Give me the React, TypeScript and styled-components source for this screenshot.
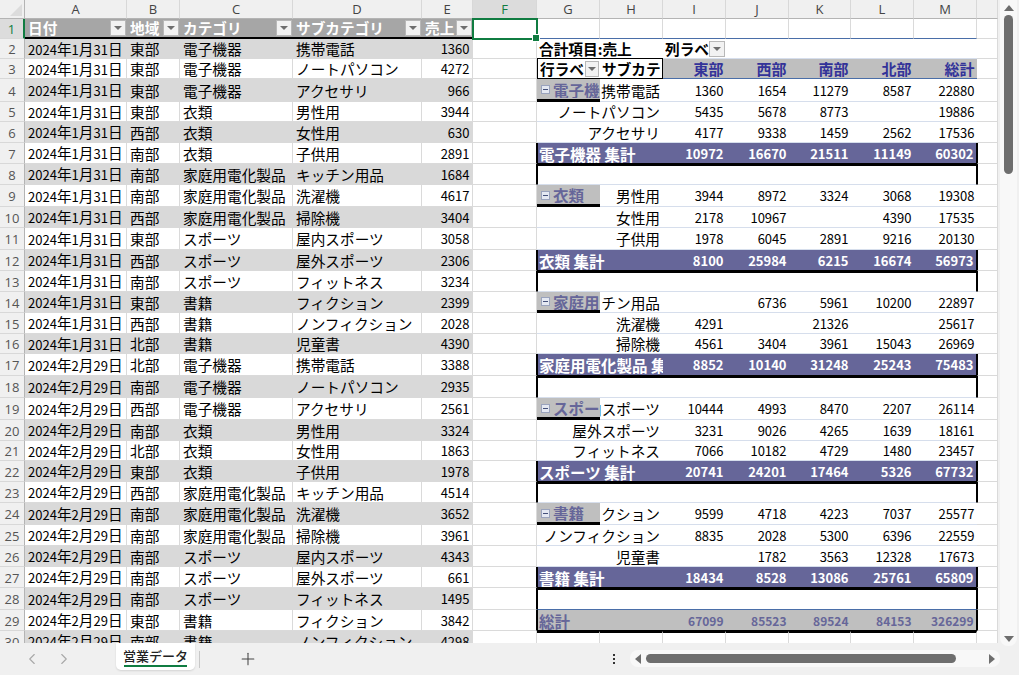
import React from 'react';
import styled, { createGlobalStyle, css } from 'styled-components';
import { ChevronLeft, ChevronRight, Plus } from 'lucide-react';

const GlobalStyle = createGlobalStyle`
  html, body { margin: 0; padding: 0; height: 100%; overflow: hidden; background: #f0f0f0; }
  #root { height: 100%; }
`;

const FONT = '"Noto Sans CJK JP", "Noto Sans", sans-serif';
const GRID = '#dadada';
const PIVOT_LINE = '#d6deec';
const PIVOT_BLUE = '#4a6ea8';
const PURPLE = '#666699';

const COLS = [
  { name: '', width: 25 },
  { name: 'A', width: 102 },
  { name: 'B', width: 53 },
  { name: 'C', width: 113 },
  { name: 'D', width: 129 },
  { name: 'E', width: 51 },
  { name: 'F', width: 64 },
  { name: 'G', width: 63 },
  { name: 'H', width: 63 },
  { name: 'I', width: 63 },
  { name: 'J', width: 63 },
  { name: 'K', width: 62 },
  { name: 'L', width: 63 },
  { name: 'M', width: 63 },
  { name: '', width: 21 },
];

// row heights are not even in the sheet, index 0 is row 1
const ROW_HEIGHTS = [20, 20, 20, 23, 20, 21, 21, 21, 22, 21, 22, 21, 21, 21, 21, 20, 22, 22, 22, 21, 20, 21, 21, 22, 21, 21, 21, 22, 21, 21];

const JAN = '2024年1月31日';
const FEB = '2024年2月29日';
const SALES: [string, string, string, string, number][] = [
  [JAN, '東部', '電子機器', '携帯電話', 1360],
  [JAN, '東部', '電子機器', 'ノートパソコン', 4272],
  [JAN, '東部', '電子機器', 'アクセサリ', 966],
  [JAN, '東部', '衣類', '男性用', 3944],
  [JAN, '西部', '衣類', '女性用', 630],
  [JAN, '南部', '衣類', '子供用', 2891],
  [JAN, '南部', '家庭用電化製品', 'キッチン用品', 1684],
  [JAN, '南部', '家庭用電化製品', '洗濯機', 4617],
  [JAN, '西部', '家庭用電化製品', '掃除機', 3404],
  [JAN, '東部', 'スポーツ', '屋内スポーツ', 3058],
  [JAN, '西部', 'スポーツ', '屋外スポーツ', 2306],
  [JAN, '南部', 'スポーツ', 'フィットネス', 3234],
  [JAN, '東部', '書籍', 'フィクション', 2399],
  [JAN, '西部', '書籍', 'ノンフィクション', 2028],
  [JAN, '北部', '書籍', '児童書', 4390],
  [FEB, '北部', '電子機器', '携帯電話', 3388],
  [FEB, '南部', '電子機器', 'ノートパソコン', 2935],
  [FEB, '西部', '電子機器', 'アクセサリ', 2561],
  [FEB, '南部', '衣類', '男性用', 3324],
  [FEB, '北部', '衣類', '女性用', 1863],
  [FEB, '東部', '衣類', '子供用', 1978],
  [FEB, '西部', '家庭用電化製品', 'キッチン用品', 4514],
  [FEB, '南部', '家庭用電化製品', '洗濯機', 3652],
  [FEB, '南部', '家庭用電化製品', '掃除機', 3961],
  [FEB, '南部', 'スポーツ', '屋内スポーツ', 4343],
  [FEB, '南部', 'スポーツ', '屋外スポーツ', 661],
  [FEB, '南部', 'スポーツ', 'フィットネス', 1495],
  [FEB, '東部', '書籍', 'フィクション', 3842],
  [FEB, '南部', '書籍', 'ノンフィクション', 4298],
];

type Values = (number | null)[];
type PivotRow =
  | { kind: 'title' }
  | { kind: 'head' }
  | { kind: 'item'; group?: string; label: string; values: Values }
  | { kind: 'total'; label: string; values: Values }
  | { kind: 'blank'; last?: boolean }
  | { kind: 'grand'; values: Values }
  | { kind: 'below' };

const PIVOT: PivotRow[] = [
  { kind: 'title' },
  { kind: 'head' },
  { kind: 'item', group: '電子機器', label: '携帯電話', values: [1360, 1654, 11279, 8587, 22880] },
  { kind: 'item', label: 'ノートパソコン', values: [5435, 5678, 8773, null, 19886] },
  { kind: 'item', label: 'アクセサリ', values: [4177, 9338, 1459, 2562, 17536] },
  { kind: 'total', label: '電子機器 集計', values: [10972, 16670, 21511, 11149, 60302] },
  { kind: 'blank' },
  { kind: 'item', group: '衣類', label: '男性用', values: [3944, 8972, 3324, 3068, 19308] },
  { kind: 'item', label: '女性用', values: [2178, 10967, null, 4390, 17535] },
  { kind: 'item', label: '子供用', values: [1978, 6045, 2891, 9216, 20130] },
  { kind: 'total', label: '衣類 集計', values: [8100, 25984, 6215, 16674, 56973] },
  { kind: 'blank' },
  { kind: 'item', group: '家庭用電化製品', label: 'キッチン用品', values: [null, 6736, 5961, 10200, 22897] },
  { kind: 'item', label: '洗濯機', values: [4291, null, 21326, null, 25617] },
  { kind: 'item', label: '掃除機', values: [4561, 3404, 3961, 15043, 26969] },
  { kind: 'total', label: '家庭用電化製品 集計', values: [8852, 10140, 31248, 25243, 75483] },
  { kind: 'blank' },
  { kind: 'item', group: 'スポーツ', label: '屋内スポーツ', values: [10444, 4993, 8470, 2207, 26114] },
  { kind: 'item', label: '屋外スポーツ', values: [3231, 9026, 4265, 1639, 18161] },
  { kind: 'item', label: 'フィットネス', values: [7066, 10182, 4729, 1480, 23457] },
  { kind: 'total', label: 'スポーツ 集計', values: [20741, 24201, 17464, 5326, 67732] },
  { kind: 'blank' },
  { kind: 'item', group: '書籍', label: 'フィクション', values: [9599, 4718, 4223, 7037, 25577] },
  { kind: 'item', label: 'ノンフィクション', values: [8835, 2028, 5300, 6396, 22559] },
  { kind: 'item', label: '児童書', values: [null, 1782, 3563, 12328, 17673] },
  { kind: 'total', label: '書籍 集計', values: [18434, 8528, 13086, 25761, 65809] },
  { kind: 'blank', last: true },
  { kind: 'grand', values: [67099, 85523, 89524, 84153, 326299] },
  { kind: 'below' },
];

// the black frame around the pivot straddles the column lines, so the
// neighbouring F and N cells carry half of it
const hasFrame = (row: PivotRow) => row.kind === 'total' || row.kind === 'blank' || row.kind === 'grand';

const Page = styled.div`
  width: 1019px;
  height: 675px;
  display: flex;
  flex-direction: column;
  background: #f0f0f0;
  font-family: ${FONT};
  overflow: hidden;
`;

const Workspace = styled.div`
  height: 643px;
  display: flex;
`;

const SheetArea = styled.div`
  width: 998px;
  overflow: hidden;
  background: #fff;
`;

const Sheet = styled.table`
  width: 998px;
  table-layout: fixed;
  border-collapse: separate;
  border-spacing: 0;
  color: #000;
  font-size: 14.67px;
  line-height: 16px;
`;

const Row = styled.tr<{ $h: number }>`
  height: ${(p) => p.$h}px;
`;

const ColHead = styled.th<{ $active?: boolean }>`
  height: 19px;
  padding: 0;
  box-sizing: border-box;
  background: ${(p) => (p.$active ? '#dcdcdc' : '#f0f0f0')};
  border-right: 1px solid #d8d8d8;
  border-bottom: 1px solid #b4b4b4;
  color: ${(p) => (p.$active ? '#107c41' : '#444')};
  font: 400 13px "Open Sans", sans-serif;
`;

const Corner = styled.th`
  position: relative;
  padding: 0;
  background: #f0f0f0;
  border-right: 1px solid #b4b4b4;
  border-bottom: 1px solid #b4b4b4;
  &::after {
    content: '';
    position: absolute;
    right: 2px;
    bottom: 2px;
    border-style: solid;
    border-width: 0 0 12px 12px;
    border-color: transparent transparent #dcdcdc transparent;
  }
`;

const RowHead = styled.th<{ $active?: boolean }>`
  padding: 1px 0 0;
  box-sizing: border-box;
  background: ${(p) => (p.$active ? '#dcdcdc' : '#f0f0f0')};
  border-right: ${(p) => (p.$active ? '2px solid #107c41' : '1px solid #b4b4b4')};
  border-bottom: 1px solid #d8d8d8;
  color: ${(p) => (p.$active ? '#107c41' : '#555')};
  font: 400 13px "Open Sans", sans-serif;
  text-align: center;
`;

const baseCell = css`
  padding: 1px 0 0;
  box-sizing: border-box;
  overflow: hidden;
  white-space: nowrap;
`;

const GridCell = styled.td<{ $under?: string; $top?: boolean; $frame?: 'left' | 'right' }>`
  ${baseCell}
  border-right: 1px solid ${(p) => (p.$frame === 'right' ? '#000' : GRID)};
  border-bottom: 1px solid ${(p) => p.$under ?? GRID};
  ${(p) => p.$frame === 'left' && 'border-left: 1px solid #000;'}
  ${(p) => p.$top && 'border-top: 2px solid #000;'}
`;

const DataCell = styled.td<{ $band: boolean; $num?: boolean }>`
  ${baseCell}
  padding: 1px 2.5px 0 3px;
  background: ${(p) => (p.$band ? '#d9d9d9' : '#fff')};
  border-right: 1px solid ${(p) => (p.$band ? '#d9d9d9' : GRID)};
  border-bottom: 1px solid ${(p) => (p.$band ? '#d9d9d9' : GRID)};
  ${(p) => p.$num && 'text-align: right; font-size: 13px;'}
`;

const Digits = styled.span`
  font-size: 13px;
`;

const TableHead = styled.td`
  ${baseCell}
  padding: 0 1px 0 3px;
  background: #a6a6a6;
  border-bottom: 2px solid #000;
  color: #fff;
  font-weight: 700;
`;

const HeadInner = styled.div`
  display: flex;
  align-items: center;
  justify-content: space-between;
  overflow: hidden;
`;

const FilterButton = styled.span<{ $w?: number }>`
  flex: none;
  width: ${(p) => p.$w ?? 16}px;
  height: 16px;
  box-sizing: border-box;
  display: flex;
  align-items: center;
  justify-content: center;
  background: #f2f2f2;
  border: 1px solid #b8b8b8;
  &::after {
    content: '';
    border-style: solid;
    border-width: 4px 4px 0 4px;
    border-color: #6e6e6e transparent transparent transparent;
  }
`;

const SelectedCell = styled.td`
  position: relative;
  padding: 0;
  box-sizing: border-box;
  outline: 2px solid #107c41;
  outline-offset: -1px;
`;

const FillHandle = styled.span`
  position: absolute;
  right: -3px;
  bottom: -3px;
  width: 6px;
  height: 6px;
  background: #107c41;
  border: 1px solid #fff;
  z-index: 2;
`;

const TitleCell = styled.td<{ $boxed?: boolean }>`
  ${baseCell}
  padding-left: 2px;
  font-weight: 700;
  border-bottom: 1px solid ${(p) => (p.$boxed ? '#000' : PIVOT_LINE)};
`;

const TitleLabel = styled.div`
  display: flex;
  align-items: center;
  overflow: hidden;
`;

const HeadBoxCell = styled.td<{ $first?: boolean }>`
  ${baseCell}
  padding-left: 2px;
  font-weight: 700;
  border-bottom: 1px solid #000;
  ${(p) => (p.$first ? 'border-left: 1px solid #000; padding-right: 1px;' : 'border-right: 1px solid #000;')}
`;

const ValueCell = styled.td<{ $tone: 'item' | 'head' | 'total' | 'grand'; $edge?: boolean }>`
  ${baseCell}
  padding-right: 2.5px;
  text-align: right;
  font-size: 13px;
  border-bottom: 1px solid ${PIVOT_LINE};
  ${(p) =>
    p.$tone === 'head' &&
    css`
      background: #bfbfbf;
      color: #333399;
      font-size: 15px;
      font-weight: 700;
      border-bottom-color: ${PIVOT_BLUE};
    `}
  ${(p) =>
    p.$tone === 'total' &&
    css`
      background: ${PURPLE};
      color: #fff;
      font-weight: 700;
      border-bottom-color: #000;
    `}
  ${(p) =>
    p.$tone === 'grand' &&
    css`
      background: #bfbfbf;
      color: ${PURPLE};
      font-size: 12px;
      font-weight: 700;
      border-bottom-color: #000;
    `}
  ${(p) => p.$edge && 'border-right: 1px solid #000;'}
`;

const GroupCell = styled.td`
  ${baseCell}
  padding-left: 4px;
  background: #bfbfbf;
  color: ${PURPLE};
  font-size: 15.5px;
  font-weight: 700;
  border-bottom: 3px solid #000;
`;

const GroupLabel = styled.div`
  display: flex;
  align-items: center;
  gap: 3px;
  overflow: hidden;
`;

const Collapse = styled.span`
  flex: none;
  position: relative;
  width: 9px;
  height: 9px;
  box-sizing: border-box;
  background: #e4e8f2;
  border: 1px solid #9aa3bd;
  &::after {
    content: '';
    position: absolute;
    left: 1px;
    right: 1px;
    top: 3px;
    height: 1px;
    background: #44507a;
  }
`;

const ItemCell = styled.td`
  ${baseCell}
  padding-right: 3px;
  border-bottom: 1px solid ${PIVOT_LINE};
`;

// right aligned text that gets cut on the left side when the cell is too narrow
const ItemLabel = styled.div`
  display: flex;
  justify-content: flex-end;
  overflow: hidden;
  span {
    flex: none;
  }
`;

const TotalLabel = styled.td<{ $grand?: boolean }>`
  ${baseCell}
  padding-left: 1px;
  font-size: 15.5px;
  font-weight: 700;
  border-left: 1px solid #000;
  border-bottom: 1px solid #000;
  background: ${(p) => (p.$grand ? '#bfbfbf' : PURPLE)};
  color: ${(p) => (p.$grand ? PURPLE : '#fff')};
`;

const BlankCell = styled.td<{ $edge?: 'left' | 'right'; $blue?: boolean }>`
  padding: 0;
  box-sizing: border-box;
  border-top: 2px solid #000;
  border-bottom: 1px solid ${(p) => (p.$blue ? PIVOT_BLUE : PIVOT_LINE)};
  ${(p) => p.$edge && `border-${p.$edge}: 1px solid #000;`}
`;

const ScrollColumn = styled.div`
  flex: none;
  width: 21px;
  height: 646px;
  box-sizing: border-box;
  padding: 0 2px;
  position: relative;
  z-index: 1;
`;

const VTrack = styled.div`
  height: 100%;
  display: flex;
  flex-direction: column;
  align-items: center;
  background: #f8f8f8;
  border-radius: 0 0 8px 8px;
  padding: 5px 0 4px;
  box-sizing: border-box;
`;

const VThumb = styled.div`
  width: 9px;
  height: 159px;
  margin-top: 4px;
  border-radius: 5px;
  background: #6e6e6e;
`;

const Arrow = styled.span<{ $dir: 'up' | 'down' | 'left' | 'right' }>`
  flex: none;
  border-style: solid;
  ${(p) => p.$dir === 'up' && 'border-width: 0 5px 6px 5px; border-color: transparent transparent #6e6e6e transparent;'}
  ${(p) => p.$dir === 'down' && 'border-width: 6px 5px 0 5px; border-color: #6e6e6e transparent transparent transparent;'}
  ${(p) => p.$dir === 'left' && 'border-width: 5px 6px 5px 0; border-color: transparent #6e6e6e transparent transparent;'}
  ${(p) => p.$dir === 'right' && 'border-width: 5px 0 5px 6px; border-color: transparent transparent transparent #6e6e6e;'}
`;

const VSpacer = styled.div`
  flex: 1;
`;

const TabBar = styled.div`
  flex: 1;
  display: flex;
  align-items: flex-start;
  color: #a8a8a8;
`;

const NavGroup = styled.div`
  width: 116px;
  height: 32px;
  padding-left: 23px;
  box-sizing: border-box;
  display: flex;
  align-items: center;
  gap: 14px;
`;

const Tab = styled.div`
  width: 79px;
  height: 27px;
  margin-right: 4px;
  box-sizing: border-box;
  display: flex;
  justify-content: center;
  padding-top: 3px;
  background: #fff;
  border-radius: 0 0 5px 5px;
  box-shadow: 0 1px 2px rgba(0, 0, 0, 0.12);
  position: relative;
  color: #222;
  font-size: 13px;
  line-height: 19px;
  font-weight: 500;
  &::after {
    content: '';
    position: absolute;
    left: 8px;
    right: 8px;
    bottom: 3px;
    height: 2px;
    background: #107c41;
  }
`;

const TabDivider = styled.div`
  width: 1px;
  height: 17px;
  margin-top: 8px;
  background: #c8c8c8;
`;

const AddSheet = styled.div`
  width: 96px;
  height: 32px;
  display: flex;
  align-items: center;
  justify-content: center;
  color: #444;
`;

const TabSpacer = styled.div`
  flex: 1;
`;

const Dots = styled.div`
  width: 30px;
  height: 32px;
  display: flex;
  flex-direction: column;
  align-items: center;
  justify-content: center;
  gap: 2px;
  margin-right: 1px;
  span {
    width: 2px;
    height: 2px;
    background: #333;
  }
`;

const HTrack = styled.div`
  width: 370px;
  height: 17px;
  margin: 7px 19px 0 0;
  box-sizing: border-box;
  padding: 0 5px;
  display: flex;
  align-items: center;
  background: #f8f8f8;
  border-radius: 8px;
`;

const HThumb = styled.div`
  width: 310px;
  height: 9px;
  margin: 0 0 0 5px;
  border-radius: 5px;
  background: #6e6e6e;
`;

const HSpacer = styled.div`
  flex: 1;
`;

const DateText = ({ value }: { value: string }) => (
  <>
    {value.split(/(\d+)/).map((part, i) => (/\d/.test(part) ? <Digits key={i}>{part}</Digits> : part))}
  </>
);

const valueCells = (values: Values, tone: 'item' | 'total' | 'grand') =>
  values.map((v, i) => (
    <ValueCell key={i} $tone={tone} $edge={tone !== 'item' && i === values.length - 1}>
      {v}
    </ValueCell>
  ));

const renderPivot = (row: PivotRow) => {
  switch (row.kind) {
    case 'title':
      return (
        <>
          <TitleCell colSpan={2} $boxed>
            合計項目:売上
          </TitleCell>
          <TitleCell colSpan={5}>
            <TitleLabel>
              列ラベ
              <FilterButton />
            </TitleLabel>
          </TitleCell>
        </>
      );
    case 'head':
      return (
        <>
          <HeadBoxCell $first>
            <HeadInner>
              行ラベ
              <FilterButton $w={14} />
            </HeadInner>
          </HeadBoxCell>
          <HeadBoxCell>サブカテ</HeadBoxCell>
          {['東部', '西部', '南部', '北部', '総計'].map((t) => (
            <ValueCell key={t} $tone="head">
              {t}
            </ValueCell>
          ))}
        </>
      );
    case 'item':
      return (
        <>
          {row.group && (
            <GroupCell>
              <GroupLabel>
                <Collapse />
                <span>{row.group}</span>
              </GroupLabel>
            </GroupCell>
          )}
          <ItemCell colSpan={row.group ? 1 : 2}>
            <ItemLabel>
              <span>{row.label}</span>
            </ItemLabel>
          </ItemCell>
          {valueCells(row.values, 'item')}
        </>
      );
    case 'total':
      return (
        <>
          <TotalLabel colSpan={2}>{row.label}</TotalLabel>
          {valueCells(row.values, 'total')}
        </>
      );
    case 'grand':
      return (
        <>
          <TotalLabel colSpan={2} $grand>
            総計
          </TotalLabel>
          {valueCells(row.values, 'grand')}
        </>
      );
    case 'blank':
      return (
        <>
          <BlankCell colSpan={2} $edge="left" $blue={row.last} />
          <BlankCell colSpan={4} $blue={row.last} />
          <BlankCell $edge="right" $blue={row.last} />
        </>
      );
    default:
      return (
        <>
          {COLS.slice(7, 14).map((c) => (
            <GridCell key={c.name} $top />
          ))}
        </>
      );
  }
};

const App = () => {
  return (
    <Page>
      <GlobalStyle />
      <Workspace>
        <SheetArea>
          <Sheet>
            <colgroup>
              {COLS.map((c, i) => (
                <col key={i} style={{ width: c.width }} />
              ))}
            </colgroup>
            <thead>
              <tr>
                <Corner />
                {COLS.slice(1).map((c, i) => (
                  <ColHead key={i} $active={c.name === 'F'}>
                    {c.name}
                  </ColHead>
                ))}
              </tr>
            </thead>
            <tbody>
              <Row $h={ROW_HEIGHTS[0]}>
                <RowHead $active>1</RowHead>
                {['日付', '地域', 'カテゴリ', 'サブカテゴリ', '売上'].map((t) => (
                  <TableHead key={t}>
                    <HeadInner>
                      {t}
                      <FilterButton />
                    </HeadInner>
                  </TableHead>
                ))}
                <SelectedCell>
                  <FillHandle />
                </SelectedCell>
                {COLS.slice(7, 14).map((c) => (
                  <GridCell key={c.name} $under={PIVOT_BLUE} />
                ))}
                <GridCell />
              </Row>
              {SALES.map((s, i) => {
                const band = i % 2 === 0;
                const framed = hasFrame(PIVOT[i]);
                return (
                  <Row key={i} $h={ROW_HEIGHTS[i + 1]}>
                    <RowHead>{i + 2}</RowHead>
                    <DataCell $band={band}>
                      <DateText value={s[0]} />
                    </DataCell>
                    <DataCell $band={band}>{s[1]}</DataCell>
                    <DataCell $band={band}>{s[2]}</DataCell>
                    <DataCell $band={band}>{s[3]}</DataCell>
                    <DataCell $band={band} $num>
                      {s[4]}
                    </DataCell>
                    <GridCell $frame={framed ? 'right' : undefined} />
                    {renderPivot(PIVOT[i])}
                    <GridCell $frame={framed ? 'left' : undefined} />
                  </Row>
                );
              })}
            </tbody>
          </Sheet>
        </SheetArea>
        <ScrollColumn>
          <VTrack>
            <Arrow $dir="up" />
            <VThumb />
            <VSpacer />
            <Arrow $dir="down" />
          </VTrack>
        </ScrollColumn>
      </Workspace>
      <TabBar>
        <NavGroup>
          <ChevronLeft size={18} strokeWidth={1.5} />
          <ChevronRight size={18} strokeWidth={1.5} />
        </NavGroup>
        <Tab>営業データ</Tab>
        <TabDivider />
        <AddSheet>
          <Plus size={20} strokeWidth={1.25} />
        </AddSheet>
        <TabSpacer />
        <Dots>
          <span />
          <span />
          <span />
        </Dots>
        <HTrack>
          <Arrow $dir="left" />
          <HThumb />
          <HSpacer />
          <Arrow $dir="right" />
        </HTrack>
      </TabBar>
    </Page>
  );
};

export default App;
